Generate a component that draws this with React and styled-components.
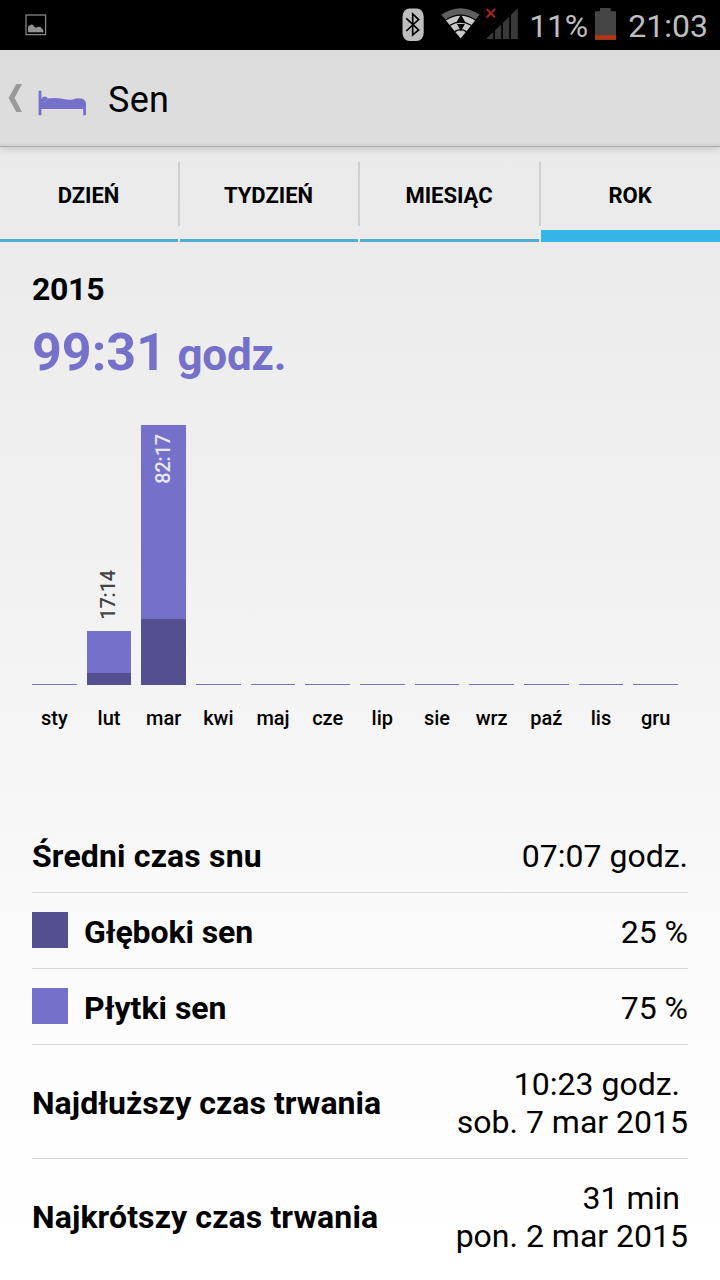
import styled, { createGlobalStyle } from "styled-components";

const months = [
  { name: "sty" },
  { name: "lut", total: 54, deep: 12, time: "17:14" },
  { name: "mar", total: 260, deep: 66, time: "82:17", inside: true },
  { name: "kwi" },
  { name: "maj" },
  { name: "cze" },
  { name: "lip" },
  { name: "sie" },
  { name: "wrz" },
  { name: "paź" },
  { name: "lis" },
  { name: "gru" },
];

const tabs = ["DZIEŃ", "TYDZIEŃ", "MIESIĄC", "ROK"];

export default function App() {
  return (
    <>
      <GlobalStyle />
      <Screen>
        <StatusBar>
          <PictureIcon />
          <StatusRight>
            <BluetoothIcon />
            <WifiIcon />
            <SignalIcon />
            <Percent>11%</Percent>
            <BatteryIcon />
            <Clock>21:03</Clock>
          </StatusRight>
        </StatusBar>
        <Header>
          <BackIcon />
          <BedIcon />
          <h1>Sen</h1>
        </Header>
        <Tabs>
          {tabs.map((tab) => (
            <Tab key={tab} $active={tab === "ROK"}>
              <span>{tab}</span>
            </Tab>
          ))}
        </Tabs>
        <Content>
          <Year>2015</Year>
          <Total>
            99:31 <small>godz.</small>
          </Total>
          <Chart>
            {months.map((month) => (
              <Month key={month.name}>
                {month.time && !month.inside && <BarTime>{month.time}</BarTime>}
                <Bar style={{ height: month.total || 1 }}>
                  {month.inside && <BarTime $inside>{month.time}</BarTime>}
                  {month.deep && <Deep style={{ height: month.deep }} />}
                </Bar>
                <MonthName>{month.name}</MonthName>
              </Month>
            ))}
          </Chart>
          <Row>
            <Label $spacing="0.15px">Średni czas snu</Label>
            <Value>07:07 godz.</Value>
          </Row>
          <Row>
            <Label $spacing="-0.1px">
              <Swatch $color="#54508f" />
              Głęboki sen
            </Label>
            <Value>25 %</Value>
          </Row>
          <Row>
            <Label>
              <Swatch $color="#7571ca" />
              Płytki sen
            </Label>
            <Value>75 %</Value>
          </Row>
          <Row $tall>
            <Label $spacing="0.04px">Najdłuższy czas trwania</Label>
            <Value>
              <Duration>10:23 godz.</Duration>
              <span>sob. 7 mar 2015</span>
            </Value>
          </Row>
          <Row $tall>
            <Label $spacing="0.12px">Najkrótszy czas trwania</Label>
            <Value>
              <Duration>31 min</Duration>
              <span>pon. 2 mar 2015</span>
            </Value>
          </Row>
        </Content>
      </Screen>
    </>
  );
}

function PictureIcon() {
  return (
    <svg width="22" height="22" viewBox="0 0 22 22">
      <rect x="1" y="1" width="19.6" height="19.6" fill="none" stroke="#858585" strokeWidth="1.3" />
      <path
        d="M3 18.3V13.5Q3.2 11.8 4.8 11.6Q5.5 10.2 7 10.4Q8.5 10.8 9.4 12.8Q10 13.6 11.3 13.8Q12.8 12.4 14.4 12.8Q16 13.1 16.7 14.6Q18.4 15 18.6 18.3Z"
        fill="#929292"
      />
    </svg>
  );
}

function BluetoothIcon() {
  return (
    <svg width="22" height="34" viewBox="0 0 22 34">
      <rect x="0.5" y="0.5" width="21.2" height="32.6" rx="7" ry="8" fill="#bebebe" />
      <path d="M4.3 10.3L16.6 22L10.7 27V6L16.6 11.6L4.3 23" fill="none" stroke="#000" strokeWidth="1.7" />
    </svg>
  );
}

function WifiIcon() {
  return (
    <svg width="40" height="34" viewBox="0 0 40 34">
      <path d="M0.3 6.8Q19.5 -6.2 38.7 6.8L34.5 11.5Q19.5 1.5 4.5 11.5Z" fill="#5f5f5f" />
      <path d="M5 12.4Q19.5 3 34.2 12.4L19.6 30.5Z" fill="#c8c8c8" />
      <path d="M8.5 17.5Q19.5 10.8 30.5 17.5M13.8 23.6Q19.6 19.8 25.4 23.6" fill="none" stroke="#000" strokeWidth="1.3" />
      <path d="M15.6 14L19.9 6.5L24.2 14ZM16 16H23.8L19.9 23.5Z" fill="#000" />
    </svg>
  );
}

function SignalIcon() {
  return (
    <svg width="34" height="34" viewBox="0 0 34 34">
      <path d="M0.5 1L9 9.5M9 1L0.5 9.5" stroke="#a82020" strokeWidth="2" />
      <path
        d="M0 31L7.2 24V31ZM9 31V22.3L15.2 16.5V31ZM17 31V14.8L23.2 8.5V31ZM25 31V6.8L31.8 0.3V31Z"
        fill="#393939"
      />
    </svg>
  );
}

function BatteryIcon() {
  return (
    <svg width="21" height="32" viewBox="0 0 21 32">
      <path d="M0 3.3H5V0H15.7V3.3H21V32H0Z" fill="#454545" />
      <path d="M0 27.3H21V31.6H0Z" fill="#bd3310" />
    </svg>
  );
}

function BackIcon() {
  return (
    <svg width="14" height="28" viewBox="0 0 14 28">
      <path d="M8.3 0H14L6.6 14L14 28H8.3L0.6 14Z" fill="#999" />
    </svg>
  );
}

function BedIcon() {
  return (
    <svg width="49" height="26" viewBox="0 0 49 26">
      <path
        d="M0.6 0.7H3.4V9Q4 6.8 6.5 6.4Q9 6.5 9.8 8.6Q16 7.4 23 8.6Q29 10.4 35 9.4Q40 7.6 44 8.8Q48 10 48 14V25.2H45.2V19H3.4V25.2H0.6Z"
        fill="#7571ca"
      />
      <path d="M9.7 8.7Q9.3 10.5 5.5 12.3" fill="none" stroke="#918dd4" strokeWidth="0.6" />
    </svg>
  );
}

const GlobalStyle = createGlobalStyle`
  * {
    box-sizing: border-box;
  }
  body {
    margin: 0;
    font-family: Roboto, sans-serif;
    color: #000000;
  }
`;

const Screen = styled.div`
  width: 720px;
  height: 1280px;
  overflow: hidden;
  display: flex;
  flex-direction: column;
  background: linear-gradient(#e9e9e9 0, #ebebeb 220px, #f4f4f4 690px, #fdfdfd 1060px, #ffffff 1280px);
`;

const StatusBar = styled.div`
  height: 50px;
  flex-shrink: 0;
  background: #000000;
  display: flex;
  justify-content: space-between;
  padding: 0 12px 0 25px;

  > svg {
    margin-top: 14px;
  }
`;

const StatusRight = styled.div`
  display: flex;
  align-items: flex-start;
  font-size: 32px;
  line-height: 52px;
  color: #bebebe;

  svg {
    margin-top: 8px;
    flex-shrink: 0;
  }
  svg + svg {
    margin-left: 17px;
  }
  svg + svg + svg {
    margin-left: 5px;
  }
`;

const Percent = styled.span`
  width: 58px;
  margin: 0 8px 0 9px;
  letter-spacing: -0.3px;
`;

const Clock = styled.span`
  margin-left: 12px;
`;

const Header = styled.header`
  height: 97px;
  flex-shrink: 0;
  display: flex;
  align-items: center;
  padding-left: 8px;
  background: linear-gradient(#dddddd 92px, #d0d0d0 96px);
  border-bottom: 1px solid #aaaaaa;
  box-shadow: 0 1px 8px rgba(0, 0, 0, 0.2);

  svg + svg {
    margin: 10px 0 0 16px;
  }
  h1 {
    margin: 3px 0 0 21px;
    font-size: 36px;
    font-weight: 400;
    line-height: 42px;
    letter-spacing: 0.3px;
  }
`;

const Tabs = styled.nav`
  height: 95px;
  flex-shrink: 0;
  display: grid;
  grid-template-columns: 178px 178px 179px 179px;
  column-gap: 2px;
`;

const Tab = styled.div`
  display: flex;
  padding-top: 15px;
  border-bottom: ${(props) => (props.$active ? "12px solid #35b4e5" : "3px solid #4fabd2")};

  span {
    flex: 1;
    height: 64px;
    padding-right: 1px;
    text-align: center;
    font-size: 22px;
    font-weight: 700;
    line-height: 68px;
  }
  &:not(:first-child) span {
    border-left: 2px solid #cfcfcf;
    margin-left: -2px;
  }
`;

const Content = styled.main`
  padding: 0 32px;
`;

const Year = styled.h2`
  margin: 28px 0 0;
  font-size: 32px;
  line-height: 38px;
  letter-spacing: -0.3px;
`;

const Total = styled.div`
  margin-top: 14px;
  height: 62px;
  font-size: 52px;
  font-weight: 700;
  line-height: 62px;
  color: #7571ca;
  white-space: nowrap;
  word-spacing: -1.5px;

  small {
    font-size: 44px;
    letter-spacing: -0.2px;
  }
`;

const Chart = styled.div`
  margin-top: 41px;
  height: 392px;
  display: grid;
  grid-template-columns: repeat(12, 1fr);
`;

const Month = styled.div`
  height: 310px;
  padding-right: 10px;
  display: flex;
  flex-direction: column;
  justify-content: flex-end;
  align-items: center;
`;

const Bar = styled.div`
  width: 100%;
  background: #7571ca;
  display: flex;
  flex-direction: column;
  justify-content: space-between;
  align-items: center;
`;

const Deep = styled.div`
  width: 100%;
  margin-top: auto;
  background: #54508f;
`;

const BarTime = styled.span`
  writing-mode: vertical-rl;
  transform: rotate(180deg);
  font-size: 20px;
  font-weight: 500;
  line-height: 24px;
  letter-spacing: -0.2px;
  color: ${(props) => (props.$inside ? "#e8e8fa" : "#444444")};
  margin: ${(props) => (props.$inside ? "9px 2px 0 0" : "0 2px 11px 0")};
`;

const MonthName = styled.span`
  height: 50px;
  padding-top: 20px;
  font-size: 20px;
  font-weight: 500;
  line-height: 26px;
`;

const Row = styled.div`
  height: ${(props) => (props.$tall ? 114 : 76)}px;
  display: flex;
  align-items: center;
  justify-content: space-between;
  font-size: 32px;
  line-height: 38px;
  border-bottom: 1px solid #d6d6d6;

  &:last-child {
    border-bottom: none;
  }
`;

const Label = styled.div`
  display: flex;
  align-items: center;
  font-weight: 700;
  letter-spacing: ${(props) => props.$spacing || "normal"};
  padding-top: 2px;
`;

const Value = styled.div`
  display: flex;
  flex-direction: column;
  align-items: flex-end;
  padding-top: 2px;
`;

const Duration = styled.span`
  margin-right: 8px;
`;

const Swatch = styled.div`
  width: 36px;
  height: 36px;
  margin: -4px 16px 0 0;
  background: ${(props) => props.$color};
`;
